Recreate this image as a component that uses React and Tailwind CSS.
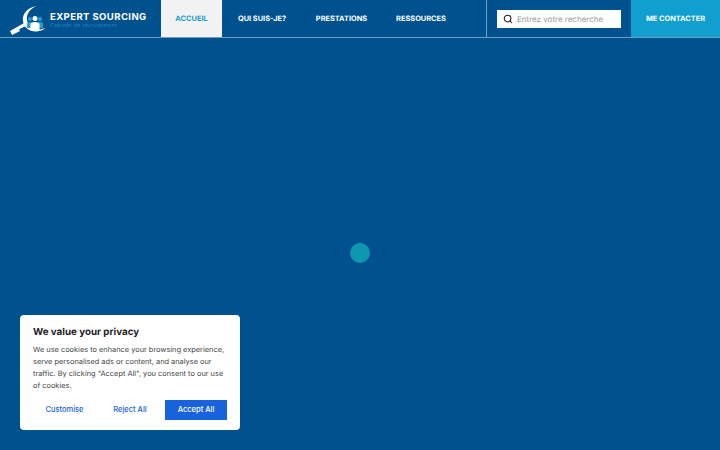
import { Search } from "lucide-react";

const font = "font-['Inter',sans-serif] [text-rendering:geometricPrecision]";

function Logo() {
  return (
    <div className="flex w-[161px] shrink-0 items-center pl-[9px]">
      <svg width="38" height="32" viewBox="0 0 38 32" className="shrink-0">
        <path d="M27 3 C18 5 13 11 14 18 C15 26 23 30 30 28 C33 27.500 35 26.500 36 25 C30 28 22 26 19 20 C16 14 19 7 27 3 Z" fill="#fff" />
        <path d="M15 20 L3 27 L4 29 L17 23 Z" fill="#fff" />
        <path d="M1 28 L9 24 L11 28 L3 32 Z" fill="#fff" />
        <circle cx="21" cy="16" r="2" fill="#2a9fd0" />
        <path d="M18 25 V21 Q18 19 21 19 Q24 19 24 21 V25 Z" fill="#2a9fd0" />
        <circle cx="31" cy="16" r="2" fill="#2a9fd0" />
        <path d="M28 25 V21 Q28 19 31 19 Q34 19 34 21 V25 Z" fill="#2a9fd0" />
        <circle cx="26" cy="15.500" r="2.500" fill="#fff" />
        <path d="M21.500 27 V21.500 Q21.500 19 26 19 Q30.500 19 30.500 21.500 V27 Z" fill="#fff" />
      </svg>
      <div className="ml-[3px] flex flex-col pt-[4px]">
        <span className="text-[9.5px] leading-[10px] font-bold tracking-[0.42px] whitespace-nowrap text-white">EXPERT SOURCING</span>
        <span className="text-[5px] leading-[6px] tracking-[0.5px] whitespace-nowrap text-[#2a8cc4]">Cabinet de recrutement</span>
      </div>
    </div>
  );
}

export default function App() {
  return (
    <div className={`relative flex h-[450px] w-[720px] flex-col overflow-hidden bg-[#00528f] ${font}`}>
      <header className="flex h-[38px] shrink-0 border-b border-[#6f9fc3]">
        <Logo />
        <nav className="flex items-stretch text-[7.4px] font-bold whitespace-nowrap text-white">
          <a className="flex w-[61px] items-center justify-center bg-[#f2f2f2] text-[#1a9ccb]">ACCUEIL</a>
          <a className="ml-[16px] flex w-[48px] items-center justify-center">QUI SUIS-JE?</a>
          <a className="ml-[30px] flex w-[51px] items-center justify-center">PRESTATIONS</a>
          <a className="ml-[29px] flex w-[50px] items-center justify-center">RESSOURCES</a>
        </nav>
        <div className="ml-auto flex items-center border-l border-[#6f9fc3] px-[10px]">
          <div className="flex h-[18px] w-[124px] items-center bg-white pl-[6px]">
            <Search size={10} strokeWidth={2.5} className="shrink-0 text-[#222]" />
            <span className="ml-[4px] text-[8px] whitespace-nowrap text-[#999]">Entrez votre recherche</span>
          </div>
        </div>
        <a className="flex w-[89px] items-center justify-center bg-[#119fd0] pt-[1px] text-[7.4px] font-bold whitespace-nowrap text-white">ME CONTACTER</a>
      </header>

      <main className="flex flex-1 items-center justify-center pt-[18px]">
        <div className="h-5 w-5 rounded-full bg-[#0f97b0]" />
      </main>

      <div className="absolute top-[315px] left-[20px] h-[115px] w-[220px] rounded-[4px] bg-white px-[13px] pt-[11px]">
        <h2 className="text-[9.8px] leading-[13px] font-bold text-[#1d1d1f]">We value your privacy</h2>
        <p className="mt-[5px] text-[7.4px] leading-[12px] whitespace-nowrap text-[#444]">
          We use cookies to enhance your browsing experience,
          <br />
          serve personalised ads or content, and analyse our
          <br />
          traffic. By clicking "Accept All", you consent to our use
          <br />
          of cookies.
        </p>
        <div className="mt-[8px] flex items-center gap-[4px] text-[7.5px] font-medium">
          <button className="h-5 w-[62px] pl-[1px] text-[#1863dc]">Customise</button>
          <button className="h-5 w-[62px] text-[#1863dc]">Reject All</button>
          <button className="h-5 w-[62px] bg-[#1863dc] text-white">Accept All</button>
        </div>
      </div>
    </div>
  );
}
